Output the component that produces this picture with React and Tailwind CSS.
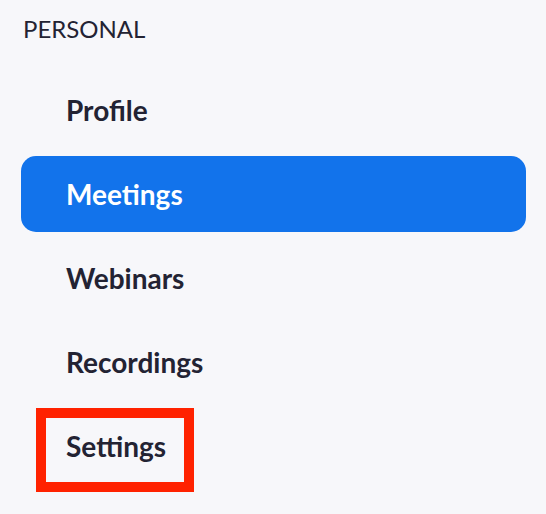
const items = ['Profile', 'Meetings', 'Webinars', 'Recordings', 'Settings'];

export default function App() {
  const active = 'Meetings';

  return (
    <div
      className="min-h-screen w-full bg-[#f7f7fa] text-[#232333]"
      style={{ fontFamily: 'Lato, "Open Sans", sans-serif' }}
    >
      <div className="pt-[14px] pl-[23px] text-[24px] leading-[29px]">PERSONAL</div>

      <nav className="relative mt-[29px] flex flex-col gap-2 pl-[21px] pr-[20px]">
        {items.map(label => (
          <a
            key={label}
            className={
              label === active
                ? 'flex h-[76px] items-center rounded-[15px] bg-[#1273eb] pl-[45px] text-[28px] font-bold text-white'
                : 'flex h-[76px] items-center pl-[45px] text-[28px] font-bold'
            }
          >
            {label}
          </a>
        ))}

        {/* annotation box around Settings */}
        <div className="pointer-events-none absolute top-[336px] left-[36px] h-[84px] w-[158px] border-[10px] border-[#ff2200]" />
      </nav>
    </div>
  );
}
